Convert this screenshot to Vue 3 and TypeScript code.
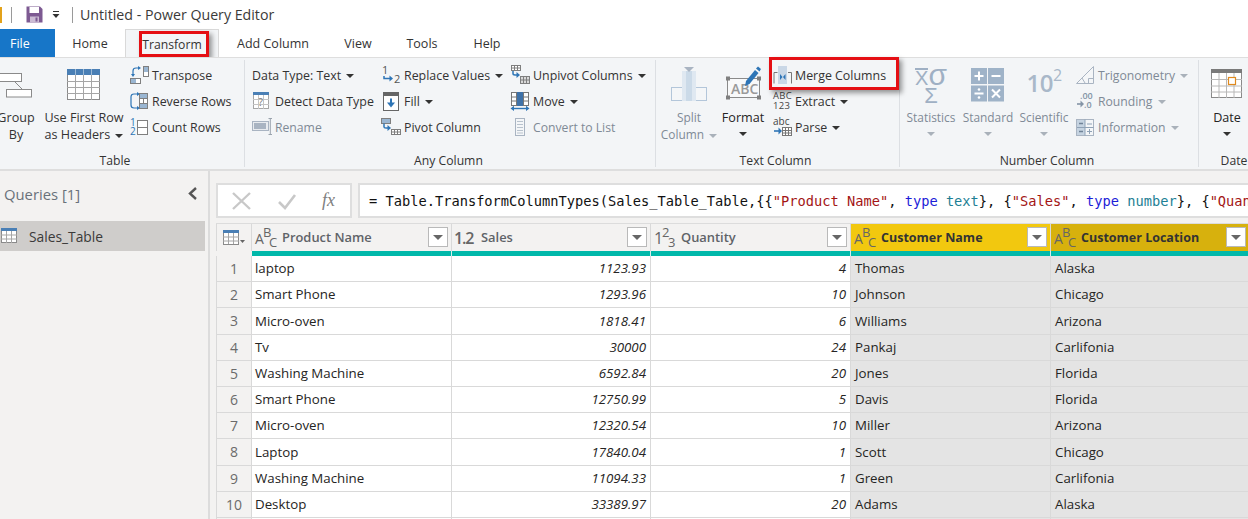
<script setup lang="ts">
interface Row { n: number; product: string; sales: string; qty: string; customer: string; location: string }
const rows: Row[] = [
  { n: 1, product: 'laptop', sales: '1123.93', qty: '4', customer: 'Thomas', location: 'Alaska' },
  { n: 2, product: 'Smart Phone', sales: '1293.96', qty: '10', customer: 'Johnson', location: 'Chicago' },
  { n: 3, product: 'Micro-oven', sales: '1818.41', qty: '6', customer: 'Williams', location: 'Arizona' },
  { n: 4, product: 'Tv', sales: '30000', qty: '24', customer: 'Pankaj', location: 'Carlifonia' },
  { n: 5, product: 'Washing Machine', sales: '6592.84', qty: '20', customer: 'Jones', location: 'Florida' },
  { n: 6, product: 'Smart Phone', sales: '12750.99', qty: '5', customer: 'Davis', location: 'Florida' },
  { n: 7, product: 'Micro-oven', sales: '12320.54', qty: '10', customer: 'Miller', location: 'Arizona' },
  { n: 8, product: 'Laptop', sales: '17840.04', qty: '1', customer: 'Scott', location: 'Chicago' },
  { n: 9, product: 'Washing Machine', sales: '11094.33', qty: '1', customer: 'Green', location: 'Carlifonia' },
  { n: 10, product: 'Desktop', sales: '33389.97', qty: '20', customer: 'Adams', location: 'Alaska' },
]
const tabs = ['Home', 'Transform', 'Add Column', 'View', 'Tools', 'Help']
const formula: { c: string; t: string }[] = [
  { c: '', t: '= Table.TransformColumnTypes(Sales_Table_Table,{{' },
  { c: 's', t: '"Product Name"' },
  { c: '', t: ', ' },
  { c: 'k', t: 'type' },
  { c: '', t: ' ' },
  { c: 't', t: 'text' },
  { c: '', t: '}, {' },
  { c: 's', t: '"Sales"' },
  { c: '', t: ', ' },
  { c: 'k', t: 'type' },
  { c: '', t: ' ' },
  { c: 't', t: 'number' },
  { c: '', t: '}, {' },
  { c: 's', t: '"Quantity"' },
]
</script>

<template>
  <div class="app">
    <header class="titlebar">
      <span class="appmark"></span>
      <span class="vsep first"></span>
      <svg class="save" width="17" height="17" viewBox="0 0 17 17">
        <path d="M0.5 0.5H14L16.5 3V16.5H0.5Z" fill="#7d5a92" />
        <rect x="3.5" y="1" width="9.5" height="6" fill="#fff" />
        <rect x="4" y="10.5" width="9" height="6" fill="#cbbcd4" />
        <rect x="9.5" y="11.5" width="2" height="4" fill="#7d5a92" />
      </svg>
      <svg class="qat" width="8" height="8" viewBox="0 0 8 8">
        <rect x="1" y="0" width="6" height="1" fill="#333" />
        <path d="M0.5 3H7.5L4 7Z" fill="#333" />
      </svg>
      <span class="vsep second"></span>
      <span class="title">Untitled - Power Query Editor</span>
    </header>

    <nav class="tabs">
      <span class="tab file">File</span>
      <span
        v-for="t in tabs"
        :key="t"
        class="tab"
        :class="[t === 'Transform' ? 'active' : '', 't-' + t.replace(' ', '').toLowerCase()]"
      >{{ t }}<i v-if="t === 'Transform'" class="callout tab-callout"></i></span>
    </nav>

    <section class="ribbon">
      <!-- TABLE -->
      <div class="group g-table">
        <div class="body">
          <div class="big b-group">
            <svg class="ico ico-group" width="38" height="36" viewBox="0 0 38 36">
              <rect x="-3.5" y="7.5" width="28" height="8" fill="#fff" stroke="#8a8a8a" />
              <rect x="9.5" y="23.5" width="25" height="7.5" fill="#fff" stroke="#8a8a8a" />
              <path d="M18 16L25 23" stroke="#8a8a8a" fill="none" />
            </svg>
            <span class="lbl">Group</span><span class="lbl">By</span>
          </div>
          <div class="big b-first">
            <svg class="ico" width="34" height="36" viewBox="0 0 34 36">
              <rect x="0.5" y="3.5" width="32" height="30" fill="#fff" stroke="#8a8a8a" />
              <rect x="0" y="3" width="33" height="6" fill="#4a7fb5" />
              <path d="M8.5 3V34M16.5 3V34M24.5 3V34M0 15.5H33M0 21.5H33M0 27.5H33" stroke="#a6a6a6" fill="none" />
              <path d="M8.5 3V9M16.5 3V9M24.5 3V9" stroke="#9dbad6" fill="none" />
            </svg>
            <span class="lbl">Use First Row</span>
            <span class="lbl">as Headers <i class="caret"></i></span>
          </div>
          <div class="col c-tbl">
            <div class="small">
              <svg width="19" height="19" viewBox="0 0 19 19">
                <rect x="13.5" y="0.5" width="5" height="10" fill="#fff" stroke="#7f7f7f" />
                <rect x="14" y="1" width="4" height="5" fill="#9ab6d2" />
                <rect x="0.5" y="12.5" width="10" height="5" fill="#fff" stroke="#7f7f7f" />
                <rect x="1" y="13" width="5" height="4" fill="#9ab6d2" />
                <path d="M3 9V5Q3 2 6 2H9" stroke="#2e75b6" stroke-width="1.2" fill="none" />
                <path d="M8 0L11 2L8 4ZM1 8L3 11L5 8Z" fill="#2e75b6" />
              </svg>
              <span>Transpose</span>
            </div>
            <div class="small">
              <svg width="19" height="19" viewBox="0 0 19 19">
                <path d="M8 2H4Q1 2 1 5V13Q1 16 4 16H8" stroke="#2e75b6" stroke-width="1.2" fill="none" />
                <path d="M7 0L10 2L7 4ZM7 14L10 16L7 18Z" fill="#2e75b6" />
                <rect x="9.5" y="1.5" width="8" height="15" fill="#fff" stroke="#7f7f7f" />
                <rect x="10" y="2" width="7" height="4" fill="#9ab6d2" />
                <rect x="10" y="12" width="7" height="4" fill="#9ab6d2" />
                <path d="M9.5 6.5H17.5M9.5 11.5H17.5M13.5 6.5V11.5" stroke="#7f7f7f" fill="none" />
              </svg>
              <span>Reverse Rows</span>
            </div>
            <div class="small">
              <svg width="19" height="19" viewBox="0 0 19 19">
                <text x="0" y="8" class="svg-num">1</text>
                <text x="0" y="17" class="svg-num">2</text>
                <rect x="7.5" y="2.5" width="10" height="14" fill="#fff" stroke="#7f7f7f" />
                <path d="M7.5 9.5H17.5" stroke="#7f7f7f" />
              </svg>
              <span>Count Rows</span>
            </div>
          </div>
        </div>
        <div class="glabel">Table</div>
      </div>

      <!-- ANY COLUMN -->
      <div class="group g-any">
        <div class="body">
          <div class="col c-any1">
            <div class="small"><span>Data Type: Text <i class="caret"></i></span></div>
            <div class="small">
              <svg width="20" height="20" viewBox="0 0 20 20">
                <rect x="1.5" y="1.5" width="15" height="16" fill="#fff" stroke="#a6a6a6" />
                <rect x="1" y="1" width="16" height="3" fill="#4a7fb5" />
                <path d="M6.5 4V18M11.5 4V18M1 8.5H17M1 13.5H17" stroke="#c4c4c4" fill="none" />
                <text x="6.5" y="15" class="svg-q">?</text>
              </svg>
              <span>Detect Data Type</span>
            </div>
            <div class="small off">
              <svg width="20" height="20" viewBox="0 0 20 20">
                <rect x="0.5" y="4.5" width="16" height="9" fill="#e8ebef" stroke="#a9b4c2" />
                <rect x="2" y="6" width="12" height="6" fill="#a9b4c2" />
                <path d="M16.5 1.5H20M16.5 17.5H20M18.3 1.5V17.5" stroke="#9aa3ad" fill="none" />
              </svg>
              <span>Rename</span>
            </div>
          </div>
          <div class="col c-any2">
            <div class="small">
              <svg width="20" height="20" viewBox="0 0 20 20">
                <text x="1" y="9" class="svg-d">1</text>
                <text x="13" y="18" class="svg-d">2</text>
                <path d="M3 11V13.5H10" stroke="#2e75b6" stroke-width="1.5" fill="none" />
                <path d="M8.5 10.5L12 13.5L8.5 16.5Z" fill="#2e75b6" />
              </svg>
              <span>Replace Values <i class="caret"></i></span>
            </div>
            <div class="small">
              <svg width="20" height="20" viewBox="0 0 20 20">
                <rect x="2.5" y="1.5" width="15" height="18" fill="#fff" stroke="#666" />
                <rect x="2" y="1" width="16" height="4" fill="#666" />
                <path d="M10 7.5V14" stroke="#2e75b6" stroke-width="2" />
                <path d="M6 11.5H14L10 16.5Z" fill="#2e75b6" />
              </svg>
              <span>Fill <i class="caret"></i></span>
            </div>
            <div class="small">
              <svg width="20" height="20" viewBox="0 0 20 20">
                <rect x="0.5" y="1.5" width="9" height="5" fill="#9ab6d2" stroke="#7f7f7f" />
                <path d="M3 6.5V10Q3 11 5 11H8" stroke="#2e75b6" stroke-width="1.5" fill="none" />
                <path d="M6.5 8L10 11L6.5 14Z" fill="#2e75b6" />
                <rect x="10.5" y="12.5" width="9" height="5" fill="#fff" stroke="#7f7f7f" />
                <path d="M13.5 12.5V17.5M16.5 12.5V17.5M10.5 15H19.5" stroke="#7f7f7f" fill="none" />
              </svg>
              <span>Pivot Column</span>
            </div>
          </div>
          <div class="col c-any3">
            <div class="small">
              <svg width="20" height="20" viewBox="0 0 20 20">
                <rect x="1.5" y="0.5" width="9" height="5" fill="#fff" stroke="#7f7f7f" />
                <path d="M4.5 0.5V5.5M7.5 0.5V5.5M1.5 3H10.5" stroke="#7f7f7f" fill="none" />
                <path d="M3 6V8.5Q3 10 5 10H8" stroke="#2e75b6" stroke-width="1.5" fill="none" />
                <path d="M6.5 7L10 10L6.5 13Z" fill="#2e75b6" />
                <rect x="10.5" y="11.5" width="9" height="7" fill="#d9d9d9" stroke="#7f7f7f" />
                <path d="M13.5 11.5V18.5M16.5 11.5V18.5M10.5 15H19.5" stroke="#7f7f7f" fill="none" />
              </svg>
              <span>Unpivot Columns <i class="caret"></i></span>
            </div>
            <div class="small">
              <svg width="20" height="20" viewBox="0 0 20 20">
                <rect x="1.5" y="1.5" width="5" height="13" fill="#fff" stroke="#777" />
                <rect x="13.5" y="1.5" width="5" height="13" fill="#fff" stroke="#777" />
                <rect x="7" y="1" width="6" height="14" fill="#3f72a8" />
                <path d="M1.5 6H6.5M1.5 10H6.5M13.5 6H18.5M13.5 10H18.5" stroke="#777" />
                <path d="M3 17.5H17" stroke="#2e75b6" stroke-width="1.4" />
                <path d="M0.5 17.5L4 14.8V20ZM19.5 17.5L16 14.8V20Z" fill="#2e75b6" />
              </svg>
              <span>Move <i class="caret"></i></span>
            </div>
            <div class="small off">
              <svg width="20" height="20" viewBox="0 0 20 20">
                <rect x="5.5" y="1.5" width="9" height="17" fill="#f4f6f8" stroke="#a9b4c2" />
                <path d="M7 4.5H13M7 7.5H13M7 10.5H13M7 13.5H13M7 16H13" stroke="#b8c2cd" />
              </svg>
              <span>Convert to List</span>
            </div>
          </div>
        </div>
        <div class="glabel">Any Column</div>
      </div>

      <!-- TEXT COLUMN -->
      <div class="group g-text">
        <div class="body">
          <div class="big b-split off">
            <svg class="ico" width="36" height="36" viewBox="0 0 36 36">
              <rect x="0.5" y="21.5" width="12" height="13" fill="#f4f6f8" stroke="#b3c6da" />
              <rect x="23.5" y="21.5" width="12" height="13" fill="#f4f6f8" stroke="#b3c6da" />
              <rect x="11" y="5" width="14" height="30" fill="#dfe8f1" />
              <rect x="15" y="5" width="6" height="30" fill="#cbdae8" />
              <path d="M13 1H23L18 6Z" fill="#a9b4c2" />
            </svg>
            <span class="lbl">Split</span>
            <span class="lbl">Column <i class="caret light"></i></span>
          </div>
          <div class="big b-format">
            <svg class="ico" width="38" height="36" viewBox="0 0 38 36">
              <rect x="3.5" y="12.5" width="32" height="19" fill="#f8f9fa" stroke="#8a8a8a" />
              <path d="M2 10.5H6V14.5H2ZM33 10.5H37V14.5H33ZM2 29.5H6V33.5H2ZM33 29.5H37V33.5H33Z" fill="#7f7f7f" />
              <text x="7" y="28" class="svg-abc">ABC</text>
              <path d="M22 15L31 4L34.5 7L25.5 18L21 20Z" fill="#2e75b6" />
              <path d="M32 2.5L34 0.5L37 3L35.5 5.5Z" fill="#2e75b6" />
            </svg>
            <span class="lbl dark">Format</span>
            <i class="caret big-caret"></i>
          </div>
          <div class="col c-text">
            <div class="small merge">
              <svg width="19" height="20" viewBox="0 0 19 20">
                <path d="M4.5 7.5H1V18.5M15 7.5H18.5V18.5" stroke="#777" fill="none" />
                <rect x="5" y="1" width="9" height="18" fill="#c9d7e6" />
                <path d="M7 9L9.5 12L7 15ZM12.5 9L10 12L12.5 15Z" fill="#2e75b6" />
              </svg>
              <span>Merge Columns</span>
              <i class="callout merge-callout"></i>
            </div>
            <div class="small">
              <span class="stack"><b>ABC</b><b>123</b></span>
              <span>Extract <i class="caret"></i></span>
            </div>
            <div class="small">
              <svg width="19" height="20" viewBox="0 0 19 20">
                <text x="0" y="8" class="svg-parse">abc</text>
                <path d="M1 14H7" stroke="#2e75b6" stroke-width="1.6" />
                <path d="M5.5 10.5L9 14L5.5 17.5Z" fill="#2e75b6" />
                <rect x="9.5" y="10.5" width="9" height="8" fill="#fff" stroke="#777" />
                <path d="M12.5 10.5V18.5M15.5 10.5V18.5M9.5 13.5H18.5M9.5 16H18.5" stroke="#777" fill="none" />
              </svg>
              <span>Parse <i class="caret"></i></span>
            </div>
          </div>
        </div>
        <div class="glabel">Text Column</div>
      </div>

      <!-- NUMBER COLUMN -->
      <div class="group g-num">
        <div class="body">
          <div class="big b-stat off">
            <div class="ico stat"><span class="xbar">X</span><span class="sigma">σ</span><em>Σ</em></div>
            <span class="lbl">Statistics</span>
            <i class="caret light big-caret"></i>
          </div>
          <div class="big b-std off">
            <svg class="ico" width="36" height="36" viewBox="0 0 36 36">
              <rect x="1" y="2" width="16" height="16" fill="#9fb3c8" />
              <rect x="18" y="2" width="16" height="16" fill="#9fb3c8" />
              <rect x="1" y="19.5" width="16" height="16" fill="#9fb3c8" />
              <rect x="18" y="19.5" width="16" height="16" fill="#9fb3c8" />
              <path d="M4.5 10H13.5M9 5.5V14.5M21.5 10H30.5M4.5 27.5H13.5M22 23.5L30 31.5M30 23.5L22 31.5" stroke="#fff" stroke-width="2" />
              <circle cx="9" cy="23.5" r="1.3" fill="#fff" />
              <circle cx="9" cy="31.5" r="1.3" fill="#fff" />
            </svg>
            <span class="lbl">Standard</span>
            <i class="caret light big-caret"></i>
          </div>
          <div class="big b-sci off">
            <div class="ico sci">10<sup>2</sup></div>
            <span class="lbl">Scientific</span>
            <i class="caret light big-caret"></i>
          </div>
          <div class="col c-num">
            <div class="small off">
              <svg width="18" height="20" viewBox="0 0 18 20">
                <path d="M0.5 18.5L17.5 1.5V18.5Z" fill="#f4f6f8" stroke="#a9b4c2" />
                <path d="M12.5 18.5V13.5H17.5M6 13L9 18" stroke="#a9b4c2" fill="none" />
              </svg>
              <span>Trigonometry <i class="caret light"></i></span>
            </div>
            <div class="small off">
              <svg width="18" height="20" viewBox="0 0 18 20">
                <text x="4" y="8" class="svg-round">.00</text>
                <text x="8" y="17" class="svg-round">.0</text>
                <path d="M1 13H6" stroke="#8494a6" stroke-width="1.6" />
                <path d="M4.5 9.5L8 13L4.5 16.5Z" fill="#8494a6" />
              </svg>
              <span>Rounding <i class="caret light"></i></span>
            </div>
            <div class="small off">
              <svg width="18" height="20" viewBox="0 0 18 20">
                <rect x="0.5" y="2.5" width="17" height="16" fill="#f4f6f8" stroke="#a9b4c2" />
                <rect x="1" y="3" width="8" height="15" fill="#c5d3e1" />
                <path d="M9 2.5V18.5M1 10.5H17.5M11 7H16M11 14.5H16M13.5 12V17" stroke="#8fa2b6" fill="none" />
                <path d="M3 6.5H7M3 14.5H7" stroke="#6f8297" stroke-width="1.4" />
              </svg>
              <span>Information <i class="caret light"></i></span>
            </div>
          </div>
        </div>
        <div class="glabel">Number Column</div>
      </div>

      <!-- DATE -->
      <div class="group g-date">
        <div class="body">
          <div class="big b-date">
            <svg class="ico" width="32" height="36" viewBox="0 0 32 36">
              <rect x="0.5" y="3.5" width="30" height="28" fill="#fff" stroke="#8a8a8a" />
              <rect x="0" y="3" width="31" height="4" fill="#7a7a7a" />
              <path d="M8 7V32M15.5 7V32M23 7V32M0 13.5H31M0 20H31M0 26H31" stroke="#b8b8b8" fill="none" />
              <rect x="17.5" y="11.5" width="7" height="7" fill="#fff" stroke="#e08a1e" stroke-width="1.2" />
            </svg>
            <span class="lbl dark">Date</span>
            <i class="caret big-caret"></i>
          </div>
        </div>
        <div class="glabel">Date</div>
      </div>
    </section>

    <main class="main">
      <aside class="queries">
        <div class="qhead">
          <span>Queries [1]</span>
          <svg width="10" height="14" viewBox="0 0 10 14">
            <path d="M9 1L3 6.5L9 12" stroke="#555" stroke-width="2.4" fill="none" />
          </svg>
        </div>
        <div class="qitem">
          <svg width="17" height="16" viewBox="0 0 17 16">
            <rect x="0.5" y="0.5" width="15" height="14" fill="#fff" stroke="#8a8a8a" />
            <rect x="0" y="0" width="16" height="3" fill="#4a7fb5" />
            <path d="M5.5 3V15M10.5 3V15M0 7H16M0 11H16" stroke="#a6a6a6" fill="none" />
          </svg>
          <span>Sales_Table</span>
        </div>
      </aside>

      <div class="content">
        <div class="formula">
          <div class="fbtns">
            <svg width="20" height="20" viewBox="0 0 20 20"><path d="M1 2L18 18M18 2L1 18" stroke="#c8c8c8" stroke-width="2.4" /></svg>
            <svg width="20" height="20" viewBox="0 0 20 20"><path d="M2 11L8 17L18 4" stroke="#c8c8c8" stroke-width="2.6" fill="none" /></svg>
            <span class="fx"><i>f</i><i>x</i></span>
          </div>
          <div class="fbox"><span v-for="(p, i) in formula" :key="i" :class="p.c">{{ p.t }}</span></div>
        </div>

        <div class="grid">
          <div class="row head">
            <div class="hc corner">
              <svg width="22" height="17" viewBox="0 0 22 17">
                <rect x="0.5" y="1.5" width="15" height="14" fill="#fff" stroke="#8a8a8a" />
                <rect x="0" y="1" width="16" height="3" fill="#4a7fb5" />
                <path d="M5.5 4V15M10.5 4V15M0 8H16M0 12H16" stroke="#a6a6a6" fill="none" />
                <path d="M17 11H22L19.5 14Z" fill="#666" />
              </svg>
            </div>
            <div class="hc">
              <span class="abc"><b>A</b><sup>B</sup><sub>C</sub></span>
              <span class="hname">Product Name</span><span class="fbtn"></span>
            </div>
            <div class="hc">
              <span class="dec">1.2</span>
              <span class="hname">Sales</span><span class="fbtn"></span>
            </div>
            <div class="hc">
              <span class="abc num"><b>1</b><sup>2</sup><sub>3</sub></span>
              <span class="hname">Quantity</span><span class="fbtn"></span>
            </div>
            <div class="hc y1">
              <span class="abc"><b>A</b><sup>B</sup><sub>C</sub></span>
              <span class="hname">Customer Name</span><span class="fbtn"></span>
            </div>
            <div class="hc y2">
              <span class="abc"><b>A</b><sup>B</sup><sub>C</sub></span>
              <span class="hname">Customer Location</span><span class="fbtn"></span>
            </div>
          </div>
          <div class="row quality">
            <div class="qnum"></div><div></div><div></div><div></div><div></div><div></div>
          </div>
          <div v-for="r in rows" :key="r.n" class="row data">
            <div class="num-cell">{{ r.n }}</div>
            <div class="cell prod">{{ r.product }}</div>
            <div class="cell right">{{ r.sales }}</div>
            <div class="cell right">{{ r.qty }}</div>
            <div class="cell sel">{{ r.customer }}</div>
            <div class="cell sel">{{ r.location }}</div>
          </div>
          <div class="row data">
            <div class="num-cell"></div>
            <div class="cell"></div>
            <div class="cell"></div>
            <div class="cell"></div>
            <div class="cell sel"></div>
            <div class="cell sel"></div>
          </div>
        </div>
      </div>
    </main>
  </div>
</template>

<style>
html, body { margin: 0; overflow: hidden; background: #fff; }
</style>

<style scoped>
.app {
  width: 1248px;
  height: 519px;
  overflow: hidden;
  display: flex;
  flex-direction: column;
  font-family: "Open Sans", "Noto Sans", sans-serif;
  font-size: 12px;
  color: #252423;
  background: #f3f2f1;
}

/* title */
.titlebar { height: 29px; flex: none; background: #fff; display: flex; align-items: center; }
.appmark { width: 2px; height: 16px; background: #e3a21a; }
.vsep { width: 1px; height: 16px; background: #9a9a9a; }
.vsep.first { margin-left: 9px; }
.save { margin-left: 14px; }
.qat { margin-left: 9px; }
.vsep.second { margin-left: 12px; }
.title { margin-left: 7px; font-size: 14.2px; color: #3b3a39; white-space: nowrap; }

/* tabs */
.tabs { height: 28px; flex: none; background: #fff; display: flex; align-items: stretch; position: relative; z-index: 2; }
.tab { position: relative; display: flex; align-items: center; justify-content: center; white-space: nowrap; font-size: 12.5px; color: #333; box-sizing: border-box; }
.file { width: 55px; background: #1776c8; color: #fff; justify-content: flex-start; padding-left: 10px; }
.t-home { width: 70px; }
.active { width: 94px; background: #f3f5f7; border: 1px solid #d9d9d9; border-bottom: 0; margin-bottom: -1px; font-size: 12.2px; }
.t-addcolumn { width: 108px; }
.t-view { width: 62px; }
.t-tools { width: 66px; }
.t-help { width: 64px; }

.callout { position: absolute; border: 3px solid #e50f14; box-shadow: 3px 3px 5px rgba(0, 0, 0, .4); box-sizing: border-box; pointer-events: none; }
.tab-callout { left: 13px; top: 1px; width: 70px; height: 26px; }
.merge-callout { left: -4px; top: -5px; width: 130px; height: 33px; z-index: 3; }

/* ribbon */
.ribbon { height: 114px; flex: none; background: #f3f5f7; border-top: 1px solid #dedede; border-bottom: 2px solid #dedede; box-sizing: border-box; display: flex; position: relative; z-index: 3; }
.group { flex: none; display: flex; flex-direction: column; position: relative; box-sizing: border-box; padding-top: 4px; }
.group::after { content: ""; position: absolute; right: 0; top: 2px; bottom: 2px; width: 1px; background: #dcdfe3; }
.body { height: 90px; display: flex; }
.glabel { text-align: center; font-size: 12.2px; line-height: 17px; white-space: nowrap; color: #333; }
.g-table { width: 246px; margin-left: -1px; }
.g-table .glabel { padding-right: 14px; }
.g-any { width: 411px; }
.g-any .glabel { padding-right: 4px; }
.g-text { width: 244px; }
.g-text .glabel { padding-right: 5px; }
.g-num { width: 299px; }
.g-num .glabel { padding-right: 5px; }
.g-date { width: 70px; }
.g-date::after { display: none; }

.big { display: flex; flex-direction: column; align-items: center; flex: none; white-space: nowrap; }
.ico { height: 36px; flex: none; margin-top: 4px; margin-bottom: 7px; overflow: visible; }
.lbl { line-height: 17px; height: 17px; font-size: 12.6px; color: #333; }
.off, .off .lbl { color: #7f8a96; font-size: 11.9px; }
.dark { color: #252423; }
.b-group { width: 34px; }
.b-first { width: 80px; margin-left: 11px; }
.c-tbl { margin-left: 6px; }

.col { display: flex; flex-direction: column; flex: none; }
.small { height: 26px; display: flex; align-items: center; gap: 3px; white-space: nowrap; font-size: 12.4px; color: #333; position: relative; }
.small svg { flex: none; }
.small.off { color: #7f8a96; font-size: 12.2px; }
.c-any1 { width: 128px; margin-left: 7px; }
.c-any2 { width: 129px; margin-left: 1px; }
.c-any3 { width: 130px; }
.b-split { width: 56px; margin-left: 5px; }
.b-format { width: 52px; }
.c-text { margin-left: 4px; }
.b-stat { width: 58px; margin-left: 2px; }
.b-std { width: 56px; }
.b-sci { width: 54px; margin-left: 1px; }
.c-num { margin-left: 5px; }
.c-num .small { gap: 4px; }
.b-date { width: 56px; }

.caret { display: inline-block; width: 0; height: 0; border-left: 4px solid transparent; border-right: 4px solid transparent; border-top: 4px solid #333; vertical-align: middle; margin-left: 2px; }
.caret.light { border-top-color: #a9b1ba; }
.big-caret { margin: 6px 0 0; }

.svg-num { font: 10px "Open Sans", sans-serif; fill: #2e75b6; }
.svg-q { font: 10px "Open Sans", sans-serif; fill: #777; }
.svg-d { font: 11px "Open Sans", sans-serif; fill: #555; }
.svg-abc { font: 600 14px "Open Sans", sans-serif; fill: #9a9a9a; }
.svg-parse { font: 10px "Open Sans", sans-serif; fill: #444; }
.svg-round { font: 600 9px "Open Sans", sans-serif; fill: #8494a6; }
.stack { width: 19px; display: flex; flex-direction: column; font-size: 9.5px; line-height: 10px; color: #444; letter-spacing: .3px; }
.stack b { font-weight: 400; }

.stat { width: 36px; margin-top: 6px; margin-bottom: 5px; display: grid; grid-template-columns: auto auto; justify-content: center; align-content: start; align-items: baseline; font-size: 20px; line-height: 17px; color: #9fb0c4; font-family: "Liberation Sans", sans-serif; }
.stat em { grid-column: 1 / 3; text-align: center; font-style: normal; font-size: 22px; }
.xbar { border-top: 2px solid #9fb0c4; }
.sigma { font-size: 30px; line-height: 14px; }
.sci { font-size: 24px; font-weight: 600; letter-spacing: -.5px; color: #a9b8c9; line-height: 34px; white-space: nowrap; }
.sci sup { font-size: 16px; font-weight: 400; line-height: 0; vertical-align: 11px; }

/* main */
.main { flex: 1; display: flex; min-height: 0; }
.queries { width: 210px; flex: none; box-sizing: border-box; border-right: 2px solid #dcdcdc; }
.qhead { height: 50px; box-sizing: border-box; padding: 13px 11px 0 4px; display: flex; justify-content: space-between; align-items: flex-start; font-size: 14.8px; color: #69717a; line-height: 21px; }
.qhead svg { margin-top: 3px; }
.qitem { width: 205px; height: 30px; background: #cfcdcb; display: flex; align-items: center; gap: 11px; padding-left: 1px; box-sizing: border-box; font-size: 13.8px; color: #3b3a39; }
.content { flex: 1; min-width: 0; padding: 12px 0 0 6px; overflow: hidden; }
.formula { display: flex; gap: 6px; height: 35px; }
.fbtns { width: 136px; flex: none; box-sizing: border-box; background: #fff; border: 2px solid #dedede; display: flex; align-items: center; padding-left: 14px; gap: 25px; }
.fx { font-family: "Liberation Serif", serif; font-size: 18px; color: #808080; }
.fbox { flex: 1; min-width: 0; box-sizing: border-box; background: #fff; border: 2px solid #dedede; border-right: 0; font-family: "DejaVu Sans Mono", monospace; font-size: 13.7px; line-height: 33px; padding-left: 9px; white-space: pre; overflow: hidden; color: #111; }
.s { color: #a31515; }
.k { color: #1d1dd8; }
.t { color: #1e7f95; }

.grid { margin-top: 5px; width: 1040px; }
.row { display: grid; grid-template-columns: 36px 200px 199px 200px 200px 205px; }
.head { height: 28px; }
.hc { position: relative; display: flex; align-items: center; background: #f3f2f1; border-right: 1px solid #d9d9d9; border-top: 1px solid #dcdcdc; box-sizing: border-box; padding-left: 3px; }
.corner { justify-content: center; padding: 0; border-left: 1px solid #d9d9d9; }
.hname { font-weight: 600; font-size: 12.9px; color: #5f6368; margin-left: 5px; margin-bottom: 2px; white-space: nowrap; }
.fbtn { position: absolute; right: 3px; top: 3px; width: 20px; height: 20px; background: #fff; border: 1px solid #b9b9b9; box-sizing: border-box; }
.fbtn::after { content: ""; position: absolute; left: 4px; top: 7px; border-left: 5px solid transparent; border-right: 5px solid transparent; border-top: 5px solid #666; }
.y1 { background: #f2c80f; }
.y2 { background: #d7b10d; }
.y1 .hname, .y2 .hname { color: #333; font-weight: 700; font-size: 12.5px; margin-bottom: 0; }
.y2 .fbtn { right: 9px; }
.abc { display: inline-flex; align-items: center; width: 22px; height: 24px; position: relative; color: #666; flex: none; }
.abc b { font-weight: 400; font-size: 14px; position: absolute; left: 0; top: 6px; line-height: 14px; }
.abc sup { font-size: 13px; position: absolute; left: 8px; top: 0; line-height: 13px; vertical-align: baseline; }
.abc sub { font-size: 13px; position: absolute; left: 14px; top: 10px; line-height: 13px; vertical-align: baseline; }
.abc.num b { font-size: 16px; top: 5px; }
.dec { font-size: 16px; font-weight: 600; color: #666; width: 21px; flex: none; letter-spacing: -1.2px; margin-left: -1px; margin-right: 1px; }
.quality { height: 5px; }
.quality > div { background: #01b8aa; border-right: 1px solid #d9eeec; }
.quality .qnum { background: #f3f2f1; border: 0; }
.data { height: 26.2px; grid-template-rows: 26.2px; }
.num-cell { background: #f3f2f1; border: 1px solid #d9d9d9; border-top: 0; box-sizing: border-box; text-align: center; font-size: 14px; line-height: 25px; color: #6b6b6b; }
.cell { background: #fff; border-right: 1px solid #d9d9d9; border-bottom: 1px solid #d9d9d9; box-sizing: border-box; padding: 0.2px 4px 0; font-size: 13.3px; line-height: 25px; white-space: nowrap; color: #252423; }
.prod { padding-left: 3px; }
.right { text-align: right; font-style: italic; }
.sel { background: #e4e4e4; }
</style>
